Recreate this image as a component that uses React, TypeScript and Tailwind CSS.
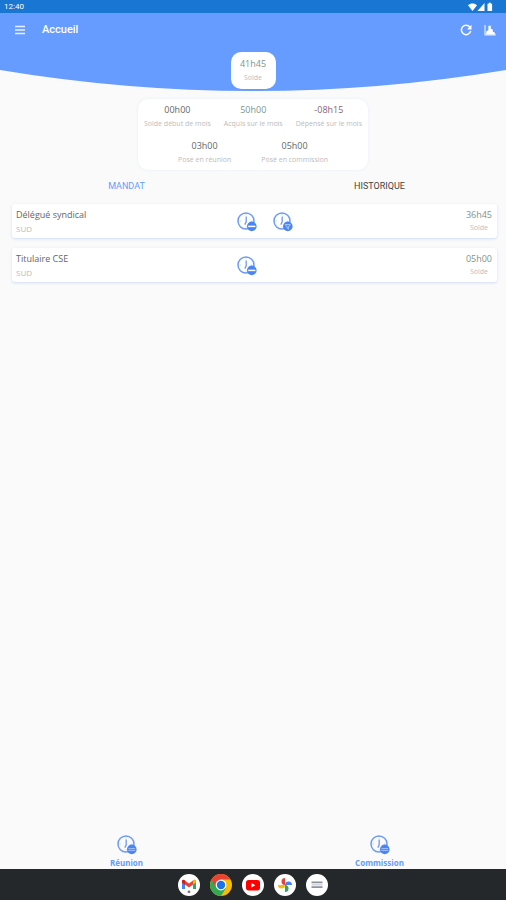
import React from 'react'

type BadgeKind = 'minus' | 'filter' | 'dots'

const ClockIcon: React.FC<{ badge: BadgeKind }> = ({ badge }) => (
  <svg viewBox="0 0 20 20" className="size-5" fill="none" aria-hidden="true">
    <circle cx="9" cy="9" r="8" stroke="#6d9bf5" strokeWidth="1.5" />
    <path d="M9.2 4.6v5.2L7.8 12.6" stroke="#6d9bf5" strokeWidth="1.3" />
    <path d="M9 2.4v1M9 14.6v1M2.6 9h1.2M14.2 9h1.2" stroke="#a9c5fb" strokeWidth="0.8" />
    <circle cx="14.8" cy="14.4" r="4.8" fill="#4a86f3" />
    {badge === 'minus' && <path d="M11.2 14.4h7.2" stroke="#fff" strokeWidth="1.5" />}
    {badge === 'filter' && (
      <path d="M12.2 12.6h5.2l-2 2.4v2.2l-1.2-1V15z" stroke="#b4cdff" strokeWidth="0.9" />
    )}
    {badge === 'dots' && (
      <path d="M11.4 13.6h6.8M11.4 15.4h6.8" stroke="#a9c6ff" strokeWidth="0.9" />
    )}
  </svg>
)

const StatusIcons: React.FC = () => (
  <svg viewBox="0 0 26 10" className="h-[10px] w-[26px]" fill="#fff" aria-hidden="true">
    <path d="M0 3.2C2.4.8 6.6.8 9 3.2L4.5 9z" />
    <path d="M16.5 1v8h-7z" />
    <path d="M19.5 1.8h1.2V.8h2.2v1h1.2V9h-4.6z" />
  </svg>
)

const GmailIcon: React.FC = () => (
  <svg viewBox="0 0 22 22" className="size-[22px]" aria-hidden="true">
    <circle cx="11" cy="11" r="11" fill="#fff" />
    <path d="M4 7v8h3V9.6z" fill="#4285f4" />
    <path d="M18 7v8h-3V9.6z" fill="#34a853" />
    <path d="M4 7.2C4 5.8 5.6 5.4 6.6 6.2L11 9.5l4.4-3.3c1-.8 2.6-.4 2.6 1v1.2l-7 5.2-7-5.2z" fill="#ea4335" />
    <path d="M15 6.5c1.4-1 3-.6 3 .8v1.2l-3 2.2z" fill="#fbbc04" />
    <path d="M4 7.2c0-1.2 1.6-1.8 3-.7v4.2L4 8.4z" fill="#c5221f" />
    <circle cx="11" cy="17.8" r="1.4" fill="#777" />
  </svg>
)

const ChromeIcon: React.FC = () => (
  <svg viewBox="0 0 22 22" className="size-[22px]" aria-hidden="true">
    <circle cx="11" cy="11" r="11" fill="#fbbc04" />
    <path d="M11 11 1.5 5.5A11 11 0 0 0 11 22l5-8z" fill="#34a853" />
    <path d="M11 11 6 14 1.5 5.5A11 11 0 0 1 20.5 5.5H11z" fill="#ea4335" />
    <circle cx="11" cy="11" r="5.4" fill="#fff" />
    <circle cx="11" cy="11" r="4.2" fill="#1a73e8" />
  </svg>
)

const YoutubeIcon: React.FC = () => (
  <svg viewBox="0 0 22 22" className="size-[22px]" aria-hidden="true">
    <circle cx="11" cy="11" r="11" fill="#fff" />
    <rect x="4" y="6" width="14" height="10.4" rx="2.6" fill="#f00" />
    <path d="M9.4 8.9v4.6l4-2.3z" fill="#fff" />
  </svg>
)

const PhotosIcon: React.FC = () => (
  <svg viewBox="0 0 22 22" className="size-[22px]" aria-hidden="true">
    <circle cx="11" cy="11" r="11" fill="#fff" />
    <path d="M11 11V4a3.5 3.5 0 0 0 0 7z" fill="#ea4335" />
    <path d="M11 11h7a3.5 3.5 0 0 0-7 0z" fill="#4285f4" />
    <path d="M11 11v7a3.5 3.5 0 0 0 0-7z" fill="#34a853" />
    <path d="M11 11H4a3.5 3.5 0 0 0 7 0z" fill="#fbbc04" />
  </svg>
)

const AppsIcon: React.FC = () => (
  <svg viewBox="0 0 22 22" className="size-[22px]" aria-hidden="true">
    <circle cx="11" cy="11" r="11" fill="#fff" />
    <path d="M5.5 8.4h11M5.5 13.2h11" stroke="#8e929c" strokeWidth="1.8" />
    <path d="M5.5 10.8h11" stroke="#d5d7dd" strokeWidth="1.6" />
  </svg>
)

const Stat: React.FC<{ value: string; label: string; color: string }> = ({ value, label, color }) => (
  <div className="flex flex-col items-center whitespace-nowrap">
    <span className={`text-[9px] leading-[14px] ${color}`}>{value}</span>
    <span className="text-[7px] leading-[14px] text-[#bcbcbc]">{label}</span>
  </div>
)

const mandates: { name: string; union: string; balance: string; badges: BadgeKind[] }[] = [
  { name: 'Délégué syndical', union: 'SUD', balance: '36h45', badges: ['minus', 'filter'] },
  { name: 'Titulaire CSE', union: 'SUD', balance: '05h00', badges: ['minus'] },
]

const dockApps = [
  { name: 'Gmail', icon: <GmailIcon /> },
  { name: 'Chrome', icon: <ChromeIcon /> },
  { name: 'YouTube', icon: <YoutubeIcon /> },
  { name: 'Photos', icon: <PhotosIcon /> },
  { name: 'Applications', icon: <AppsIcon /> },
]

const App: React.FC = () => {
  return (
    <div className="flex min-h-screen flex-col bg-[#fafafa] font-['Open_Sans',sans-serif]">
      {/* Status bar */}
      <div className="flex h-[13px] items-center justify-between bg-[#1976d2] pr-3 pl-1 font-[Roboto,sans-serif] text-[8px] leading-[13px] text-white">
        <span>12:40</span>
        <StatusIcons />
      </div>

      {/* Header */}
      <header className="relative h-[78px]">
        <svg
          viewBox="0 0 506 78"
          preserveAspectRatio="none"
          className="absolute inset-0 size-full"
          aria-hidden="true"
        >
          <path d="M0 0H506V57Q253 99 0 57Z" fill="#669bff" />
        </svg>
        <div className="relative flex h-[34px] items-center pr-2 pl-3 text-white">
          <button type="button" aria-label="Menu" className="flex size-4 items-center justify-center">
            <svg viewBox="0 0 12 10" className="h-[10px] w-3" stroke="#e8f0ff" strokeWidth="1.6" aria-hidden="true">
              <path d="M1 1.5h10M1 5h10M1 8.5h10" />
            </svg>
          </button>
          <h1 className="ml-[14px] font-[Roboto,sans-serif] text-[11px] font-medium">Accueil</h1>
          <div className="ml-auto flex items-center gap-2">
            <button type="button" aria-label="Actualiser" className="flex size-4 items-center justify-center">
              <svg viewBox="0 0 12 12" className="size-3" fill="none" aria-hidden="true">
                <path d="M9.9 3.1A4.7 4.7 0 1 0 10.7 7" stroke="#fff" strokeWidth="1.5" />
                <path d="M11.5.8v4.6H7z" fill="#fff" />
              </svg>
            </button>
            <button type="button" aria-label="Statistiques" className="flex size-4 items-center justify-center">
              <svg viewBox="0 0 12 12" className="size-3" fill="#fff" aria-hidden="true">
                <path d="M1 1v9.8h10.6" fill="none" stroke="#dfe9ff" strokeWidth="1.2" />
                <path d="M2.2 10.4V7.4L4.4 6V1.8h2.4v3l2 .6v2.4l1.8.6 1 2z" />
              </svg>
            </button>
          </div>
        </div>
        <div className="relative mx-auto mt-[5px] flex h-[37px] w-[45px] flex-col items-center rounded-[10px] bg-white pt-[5px]">
          <span className="text-[9px] leading-[14px] text-[#7d958c]">41h45</span>
          <span className="text-[7px] leading-[14px] text-[#bcbcbc]">Solde</span>
        </div>
      </header>

      <main className="flex-1">
        {/* Summary */}
        <section className="mx-auto mt-2 h-[71px] w-[230px] rounded-[10px] bg-white pt-1 shadow-[0_0_3px_#e4ecfa]">
          <div className="flex justify-between px-[6px]">
            <Stat value="00h00" label="Solde début de mois" color="text-[#666666]" />
            <Stat value="50h00" label="Acquis sur le mois" color="text-[#7d958c]" />
            <Stat value="-08h15" label="Dépensé sur le mois" color="text-[#8f626c]" />
          </div>
          <div className="mt-2 flex justify-center gap-[30px]">
            <Stat value="03h00" label="Posé en réunion" color="text-[#666666]" />
            <Stat value="05h00" label="Posé en commission" color="text-[#666666]" />
          </div>
        </section>

        {/* Tabs */}
        <div role="tablist" className="grid h-[34px] grid-cols-2 font-[Roboto,sans-serif] text-[9px]">
          <button type="button" role="tab" aria-selected="true" className="text-[#669bff]">
            MANDAT
          </button>
          <button type="button" role="tab" aria-selected="false" className="text-[#444444]">
            HISTORIQUE
          </button>
        </div>

        {/* Mandates */}
        <ul className="flex flex-col gap-[10px] pr-[9px] pl-3">
          {mandates.map((mandate) => (
            <li
              key={mandate.name}
              className="grid h-[34px] grid-cols-[1fr_34px_1fr] rounded-[3px] bg-white pr-[5px] pl-1 shadow-[0_1px_3px_#cfdcf5]"
            >
              <div className="flex flex-col pt-1">
                <span className="text-[9px] leading-[14px] text-[#666666]">{mandate.name}</span>
                <span className="text-[8px] leading-[14px] text-[#bcbcbc]">{mandate.union}</span>
              </div>
              <div className="flex items-center gap-4 pt-[2px]">
                {mandate.badges.map((badge) => (
                  <button
                    key={badge}
                    type="button"
                    aria-label={`${mandate.name} ${badge}`}
                    className="shrink-0"
                  >
                    <ClockIcon badge={badge} />
                  </button>
                ))}
              </div>
              <div className="flex flex-col items-end pt-1">
                <span className="text-[9px] leading-[14px] text-[#7d958c]">{mandate.balance}</span>
                <span className="pr-1 text-[7px] leading-[12px] text-[#bcbcbc]">Solde</span>
              </div>
            </li>
          ))}
        </ul>
      </main>

      {/* Bottom actions */}
      <nav className="grid grid-cols-2 text-[8px] leading-[12px] font-bold text-[#669bff]">
        {['Réunion', 'Commission'].map((label) => (
          <button key={label} type="button" className="flex flex-col items-center gap-[2px]">
            <ClockIcon badge="dots" />
            {label}
          </button>
        ))}
      </nav>

      {/* Dock */}
      <footer className="flex h-[31px] items-center justify-center gap-[10px] bg-[#25282a]">
        {dockApps.map((app) => (
          <button key={app.name} type="button" aria-label={app.name}>
            {app.icon}
          </button>
        ))}
      </footer>
    </div>
  )
}

export default App
